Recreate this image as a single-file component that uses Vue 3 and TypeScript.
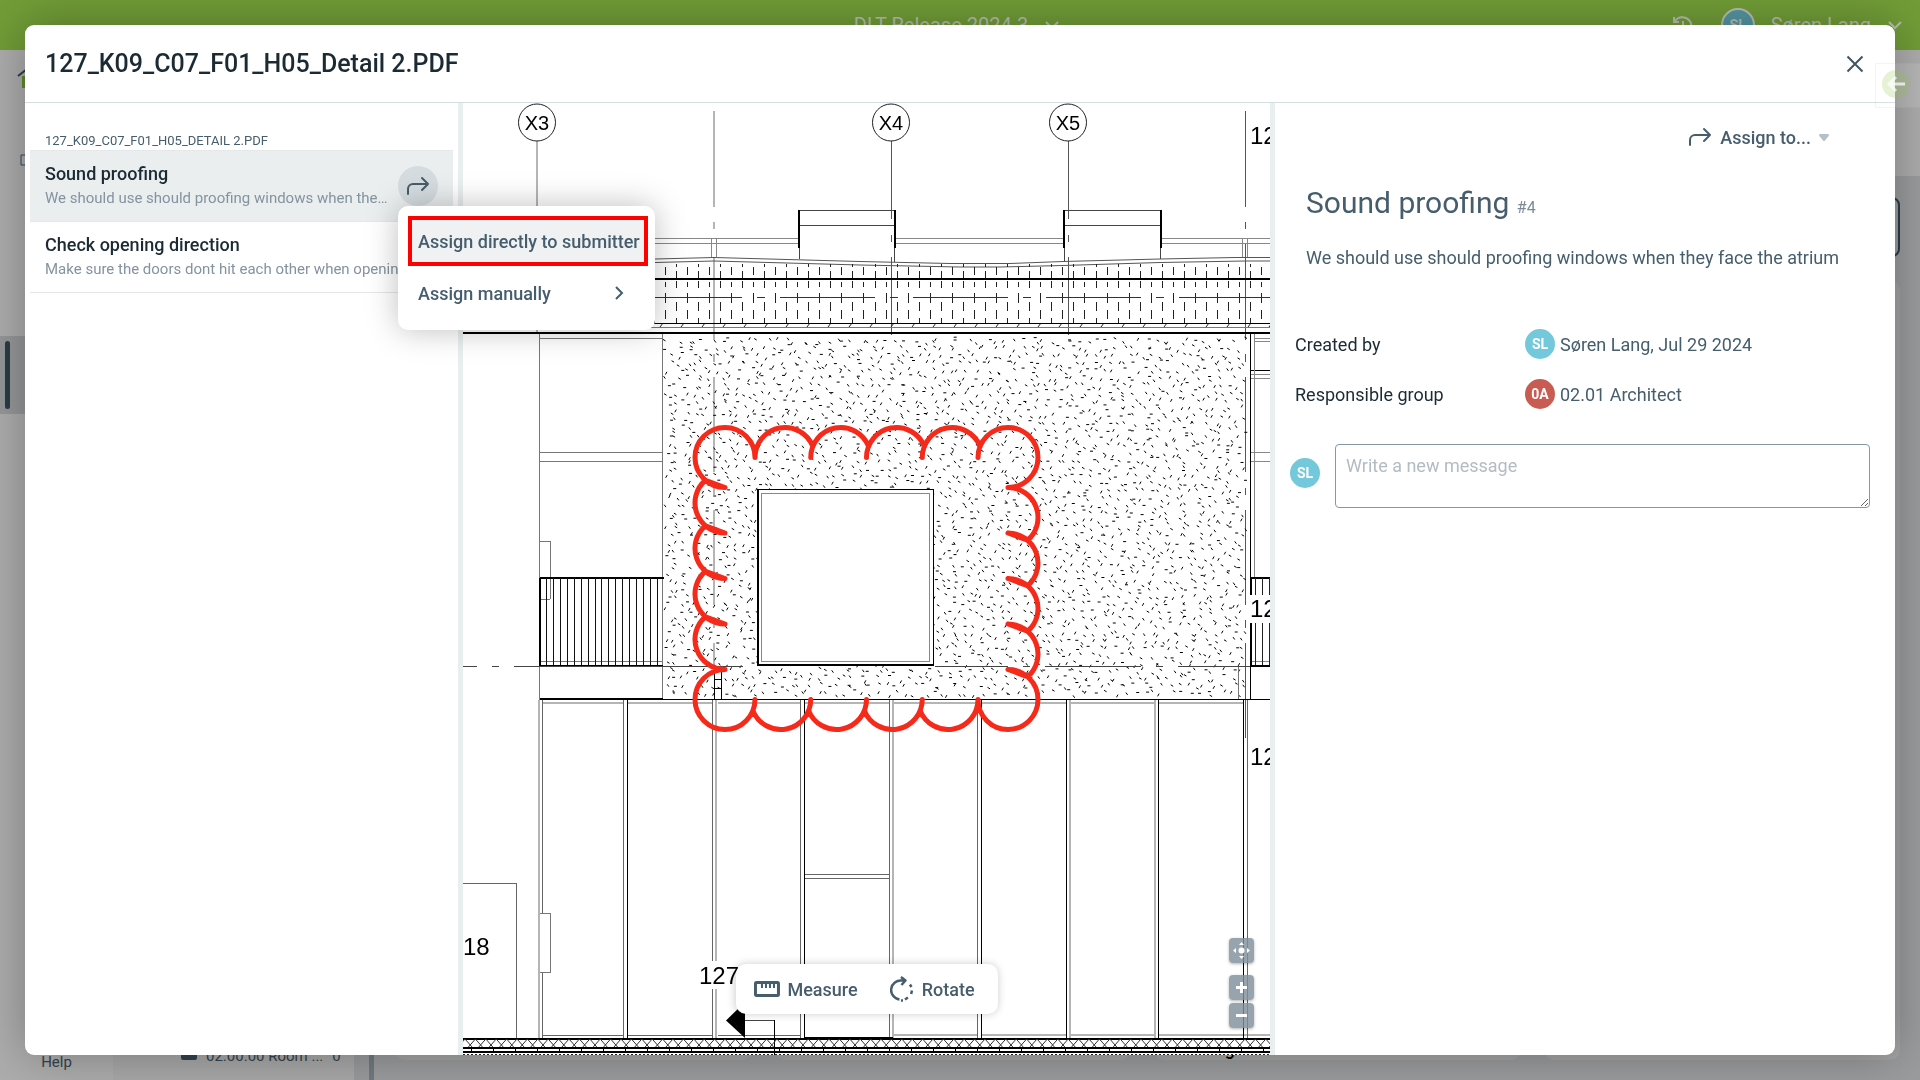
<script setup lang="ts">
import { computed, ref } from 'vue'

interface Comment {
  id: number
  title: string
  text: string
}

const fileName = '127_K09_C07_F01_H05_Detail 2.PDF'
const comments: Comment[] = [
  { id: 4, title: 'Sound proofing', text: 'We should use should proofing windows when they face the atrium' },
  { id: 5, title: 'Check opening direction', text: 'Make sure the doors dont hit each other when opening' },
]
const selectedId = ref(4)
const selected = computed(() => comments.find((c) => c.id === selectedId.value) ?? comments[0])
const menuOpen = ref(true)
const message = ref('')

const range = (n: number) => Array.from({ length: n }, (_, i) => i)

/* Concrete speckle of the facade: short strokes on a jittered grid. */
function speckle(): string {
  let seed = 41
  const rnd = () => {
    seed = (seed * 16807) % 2147483647
    return seed / 2147483647
  }
  let d = ''
  for (let y = 338; y < 694; y += 7.5) {
    for (let x = 666; x < 1246; x += 8.8) {
      const px = x + rnd() * 10 - 3
      const py = y + rnd() * 6 - 1
      const kind = Math.floor(rnd() * 4)
      const [dx, dy] = [[3, 0], [1.7, 2.4], [-1.5, 2.7], [2.5, 1.5]][kind]
      d += `M${px.toFixed(1)} ${py.toFixed(1)}l${dx} ${dy}`
    }
  }
  return d
}

/* Revision cloud: overlapping arcs of one radius, run clockwise. */
function cloud(): string {
  const r = 30
  const stepX = 55.75
  const stepY = 45.5
  const [left, right, top, bottom] = [725, 1008, 457.5, 699.5]
  const cutX = Math.sqrt(r * r - (stepX / 2) ** 2)
  const cutY = Math.sqrt(r * r - (stepY / 2) ** 2)
  const arc = (x1: number, y1: number, x2: number, y2: number, large = 0) =>
    `M${x1} ${y1}A${r} ${r} 0 ${large} 1 ${x2} ${y2}`
  let d = arc(left, top + r, left + r, top, 1)
  d += arc(right - r, top, right, top + r, 1)
  d += arc(right, bottom - r, right - r, bottom, 1)
  d += arc(left + r, bottom, left, bottom - r, 1)
  for (const k of range(4)) {
    const cx = left + r * 2 + k * stepX
    d += arc(cx - r, top, cx + stepX / 2, top - cutX)
    const bx = right - r * 2 - k * stepX
    d += arc(bx + r, bottom, bx - stepX / 2, bottom + cutX)
    const ry = top + r * 2 + k * stepY
    d += arc(right, ry - r, right + cutY, ry + stepY / 2) + `L${right} ${ry - r + stepY}`
    const ly = bottom - r * 2 - k * stepY
    d += arc(left, ly + r, left - cutY, ly - stepY / 2) + `L${left} ${ly + r - stepY}`
  }
  return d
}

function roofTicks(): string {
  let d = ''
  for (const i of range(56)) {
    const x = 654 + i * 11.05
    d += i % 2
      ? `M${x} 267v8M${x} 282v5M${x} 293v10M${x} 310v9`
      : `M${x} 264v3M${x} 271v7M${x} 281v7M${x} 302v9M${x} 318v5`
  }
  return d
}

function roofSlashes(): string {
  return range(30).map((i) => `M${660 + i * 21} 327l3 -4`).join('')
}

function railing(x0: number, count: number): string {
  return range(count).map((i) => `M${x0 + i * 6.93} 578V665`).join('')
}

function groundHatch(): string {
  return range(80).map((i) => `M${458 + i * 10.4} 1047l7 -8l7 8`).join('')
}

function groundJoints(): string {
  return range(38).map((i) => `M${471 + i * 22} 1048v4`).join('')
}

const speckles = speckle()
const cloudPath = cloud()
</script>

<template>
  <div class="page">
    <div class="topbar">
      <div class="project">
        <span>DLT Release 2024.3</span>
        <svg width="16" height="10" viewBox="0 0 16 10"><path d="M2 2l6 6 6-6" /></svg>
      </div>
      <div class="account">
        <svg width="24" height="24" viewBox="0 0 24 24"><path d="M3 4v5h5M3.500 9a9 9 0 1 1-1 5M12 8v5l3 2" /></svg>
        <span class="avatar ringed">SL</span>
        <span>Søren Lang</span>
        <svg width="16" height="10" viewBox="0 0 16 10"><path d="M2 2l6 6 6-6" /></svg>
      </div>
    </div>
    <div class="workspace">
      <div class="rail">
        <svg class="home" width="30" height="24" viewBox="0 0 30 24">
          <path d="M5 10h18v12H5z" fill="#5f8a2a" /><path d="M1 10L14 0l13 10" fill="none" stroke="#2b3c48" stroke-width="2" />
        </svg>
        <div class="rail-item"><span></span></div>
        <svg class="docs" width="16" height="12" viewBox="0 0 16 12"><path d="M1 1h14v10H1z" fill="none" stroke="#2b4c68" stroke-width="1" /></svg>
        <div class="help">Help</div>
      </div>
      <div class="tree">
        <div class="tree-row"><span class="folder"></span><span>02.00.00 Room ...</span><span>0</span></div>
      </div>
      <div class="board">
        <div class="board-head"></div>
        <div class="board-field"></div>
        <div class="board-cards">
          <div></div><div></div><div class="texted">Detailing</div><div></div>
        </div>
      </div>
    </div>
  </div>

  <div class="modal" role="dialog" :aria-label="fileName">
    <header class="modal-head">
      <h1>{{ fileName }}</h1>
      <button class="close" aria-label="Close">
        <svg width="18" height="18" viewBox="0 0 18 18"><path d="M1.500 1.500l15 15M16.500 1.500l-15 15" /></svg>
      </button>
    </header>

    <div class="modal-body">
      <aside class="list">
        <h2>{{ fileName }}</h2>
        <ul>
          <li v-for="c in comments" :key="c.id" :class="{ active: c.id === selectedId }" @click="selectedId = c.id">
            <div class="summary">
              <strong>{{ c.title }}</strong>
              <p>{{ c.text }}</p>
            </div>
            <div v-if="c.id === selectedId" class="share-wrap">
              <button class="share" aria-label="Assign" @click.stop="menuOpen = !menuOpen">
                <svg width="24" height="24" viewBox="0 0 24 24"><path d="M2 20v-5a5 5 0 0 1 5-5h15M16 4l6 6-6 6" /></svg>
              </button>
              <div v-if="menuOpen" class="menu">
                <button class="marked">Assign directly to submitter</button>
                <button>
                  <span>Assign manually</span>
                  <svg width="10" height="16" viewBox="0 0 10 16"><path d="M2 2l6 6-6 6" /></svg>
                </button>
              </div>
            </div>
          </li>
        </ul>
      </aside>

      <section class="viewer">
        <svg class="sheet" viewBox="463 103 807 952" preserveAspectRatio="xMidYMid slice">
          <g fill="none" shape-rendering="crispEdges">
            <!-- grid axes -->
            <path stroke="#b5b5b5" stroke-width="2" d="M537 141V333M714 111V207M714 222V229M714 257V340M714 354V362M714 377V472M714 488V495M714 510V605M714 620V628M714 643V670" />
            <path stroke="#555" d="M891.500 141V219M891.500 235V242M891.500 257V335M1068.500 141V219M1068.500 235V242M1068.500 257V335M1245.500 111V207M1245.500 222V229M1245.500 244V340M1245.500 354V362M1245.500 377V472M1245.500 488V495M1245.500 510V605M1245.500 620V628M1245.500 643V738" />
            <!-- parapet and roof lights -->
            <path stroke="#888" d="M463 238.500H798M463 243.500H798M896 238.500H1064M896 243.500H1064M1162 238.500H1270M1162 243.500H1270M711.500 239V257M716.500 239V257M1242.500 239V257M1247.500 239V257" />
            <path stroke="#444" d="M799 210.500H895M799 225.500H895M1064 210.500H1161M1064 225.500H1161M799.500 248V259M894.500 248V262M1064.500 248V262M1160.500 248V259" />
            <path stroke="#000" stroke-width="2" d="M799 210V248M895 210V248M1064 210V248M1161 210V248" />
          </g>
          <g fill="none">
            <path stroke="#555" d="M463 260L655 259L714 257.500L860 261.500L950 263.500H1010L1063 261.500L1160 259L1235 257.500H1270M463 264L655 262.500L714 261L860 265L960 267H1000L1063 265.500L1160 262.500L1245 261H1270" />
            <path stroke="#222" :d="roofSlashes()" />
          </g>
          <g fill="none" shape-rendering="crispEdges">
            <path stroke="#222" :d="roofTicks()" />
            <path stroke="#000" stroke-width="2" d="M463 279H1270M463 333H1270" />
            <path stroke="#000" d="M463 323.500H1270" />
            <path stroke="#777" d="M463 327.500H1270" />
            <path stroke="#333" stroke-dasharray="95 15 8 15" d="M647 297.500H1270" />
            <!-- left and right bays -->
            <path stroke="#777" d="M539.500 334V700M662.500 334V699M540 338.500H663M540 452.500H663M540 461.500H663M540 541.500H550M550.500 541V599M540 599.500H550M540 661.500H663" />
            <path stroke="#000" stroke-width="2" d="M540 578H664M540 666H663M540 699H663M540 578V666" />
            <path stroke="#111" :d="railing(546.5, 17)" />
          </g>
          <path :d="speckles" fill="none" stroke="#000" />
          <g fill="none" shape-rendering="crispEdges">
            <path stroke="#444" d="M463 666.500H477M492 666.500H499M514 666.500H743M935 666.500H1008M1023 666.500H1030M1045 666.500H1141M1156 666.500H1163M1178 666.500H1250" />
            <path stroke="#000" d="M663 699.500H1270" />
            <path stroke="#000" d="M714.500 670V699M721.500 670V699M714 679.500H721M714 688.500H721" />
            <path stroke="#777" d="M1238.500 667V699" />
            <!-- window -->
            <rect x="757.500" y="489.500" width="176" height="176" fill="#fff" stroke="#000" />
            <rect x="761.500" y="493.500" width="168" height="168" stroke="#888" />
            <path stroke="#000" d="M758.500 490V666M758 664.500H933M1250.500 334V699M1251 370.500H1270" />
            <path stroke="#888" d="M1254.500 334V578M1254 338.500H1270M1254 341.500H1270M1251 374.500H1270M1251 378.500H1270M1251 452.500H1270M1251 461.500H1270M1251 661.500H1270" />
            <path stroke="#000" stroke-width="2" d="M1250 578H1270M1250 666H1270M1251 578V666" />
            <path stroke="#222" :d="railing(1255.5, 3)" />
            <!-- ground floor glazing -->
            <path stroke="#b5b5b5" stroke-width="2" d="M539 700V1038M716 700V1038M893 700V1038M1070 700V1038M1155 700V1038M543 703H624M628 703H713M718 703H801M805 703H889M894 703H978M982 703H1066M1071 703H1154M1159 703H1243M894 1035H978M982 1035H1066M1071 1035H1154M1159 1035H1270" />
            <path stroke="#666" d="M542.500 700V1038M623.500 700V1038M712.500 700V1038M800.500 700V1038M889.500 700V1038M977.500 700V1038M1247.500 700V1038M805 874.500H889M805 878.500H889M543 1035.500H624M628 1035.500H713M718 1035.500H801M463 883.500H516M516.500 883V1038" />
            <path stroke="#000" d="M627.500 700V1038M804.500 700V1038M981.500 700V1038M1066.500 700V1038M1158.500 700V1038M1243.500 700V1038" />
            <path stroke="#fff" stroke-width="2" d="M714 872V886M714 894V908M714 1004V1018" />
            <path fill="#fff" stroke="#777" d="M539.500 913.500H550.500V972.500H539.500" />
            <!-- ground build-up -->
            <path stroke="#000" stroke-width="2" d="M463 1039H1270M463 1048H1270M463 1052H1270" />
            <path stroke="#000" stroke-width="3" d="M804 1038.500H893" />
            <path stroke="#000" :d="groundJoints()" />
            <path stroke="#222" stroke-dasharray="2 2" d="M463 1054.500H1270" />
            <path stroke="#444" d="M745 1020.500H774" />
            <path stroke="#000" d="M774.500 1020V1055" />
          </g>
          <path stroke="#333" fill="none" :d="groundHatch()" />
          <path d="M726 1020.500L745 1002V1038z" />
          <path fill="#fff" d="M698 961h42v28h-42zM1248 595h22v28h-22z" />
          <g fill="#fff" stroke="#222">
            <circle cx="537" cy="122.500" r="18.500" /><circle cx="891" cy="122.500" r="18.500" /><circle cx="1068" cy="122.500" r="18.500" />
          </g>
          <g class="axis" text-anchor="middle">
            <text x="537" y="130">X3</text><text x="891" y="130">X4</text><text x="1068" y="130">X5</text>
          </g>
          <g class="mark">
            <text x="463" y="955">18</text><text x="699" y="984">127</text>
            <text x="1250" y="144">12</text><text x="1250" y="617">12</text><text x="1250" y="765">12</text>
          </g>
          <path class="cloud" :d="cloudPath" />
        </svg>

        <div class="tools">
          <button>
            <svg width="26" height="16" viewBox="0 0 26 16"><rect x="1.500" y="1.500" width="23" height="13" rx="1" stroke-width="3" /><path d="M8 2v5M12 2v5M16 2v5M20 2v5" /></svg>
            Measure
          </button>
          <button>
            <svg width="24" height="26" viewBox="0 0 24 26">
              <path d="M15 4.500h-3a9.500 9.500 0 0 0-2.500 19M11 1l4.500 3.500-4 4.500" stroke-width="2.500" />
              <path d="M20 8.500l1.500 2.500M22 14.500l-.8 3.500M18 21.500l-3 2M11 24.500h2" stroke-width="2.500" />
            </svg>
            Rotate
          </button>
        </div>

        <div class="zoom">
          <button aria-label="Fit to view" class="fit">
            <svg width="17" height="17" viewBox="0 0 17 17"><circle cx="8.500" cy="8.500" r="3" /><path d="M8.500 0l2.500 3H6zM8.500 17l2.500-3H6zM0 8.500l3-2.500v5zM17 8.500l-3-2.500v5z" /></svg>
          </button>
          <button aria-label="Zoom in">
            <svg width="11" height="11" viewBox="0 0 11 11"><path d="M4 0h3v4h4v3H7v4H4V7H0V4h4z" /></svg>
          </button>
          <button aria-label="Zoom out">
            <svg width="11" height="11" viewBox="0 0 11 11"><path d="M0 4h11v3H0z" /></svg>
          </button>
        </div>
      </section>

      <aside class="detail">
        <div class="actions">
          <button class="assign">
            <svg width="24" height="20" viewBox="0 0 24 20"><path d="M2 18v-5a5 5 0 0 1 5-5h15M16 2l6 6-6 6" /></svg>
            <span>Assign to...</span>
            <svg class="caret" width="10" height="7" viewBox="0 0 10 7"><path d="M1 0h8q1 0 1 1.500L6 6.500q-1 1-2 0L0 1.500Q0 0 1 0z" /></svg>
          </button>
        </div>
        <h2>{{ selected.title }} <small>#{{ selected.id }}</small></h2>
        <p class="body-text">{{ selected.text }}</p>
        <dl>
          <div>
            <dt>Created by</dt>
            <dd><span class="avatar">SL</span>Søren Lang, Jul 29 2024</dd>
          </div>
          <div>
            <dt>Responsible group</dt>
            <dd><span class="avatar red">0A</span>02.01 Architect</dd>
          </div>
        </dl>
        <div class="compose">
          <span class="avatar">SL</span>
          <textarea v-model="message" aria-label="Write a new message" placeholder="Write a new message"></textarea>
        </div>
      </aside>
    </div>
  </div>

  <button class="back" aria-label="Back">
    <svg width="28" height="28" viewBox="0 0 28 28">
      <circle cx="14" cy="14" r="14" fill="#8cc63f" fill-opacity=".22" />
      <path d="M14 7l-7 7 7 7M8 14h15" fill="none" stroke="#fff" stroke-opacity=".7" stroke-width="3" />
    </svg>
  </button>
</template>

<style>
body {
  margin: 0;
  overflow: hidden;
}
</style>

<style scoped>
.page,
.modal,
.back {
  font-family: Roboto, "Liberation Sans", sans-serif;
  box-sizing: border-box;
}
button {
  font: inherit;
  border: 0;
  background: none;
  padding: 0;
  color: inherit;
  cursor: pointer;
}
h1, h2, p, ul, dl, dd {
  margin: 0;
  padding: 0;
}
svg {
  display: block;
  flex: none;
}

/* dimmed page behind the dialog */
.page {
  height: 100vh;
  display: flex;
  flex-direction: column;
  background: #adadad;
  overflow: hidden;
}
.topbar {
  height: 50px;
  flex: none;
  background: #719d37;
  color: #b9bdb2;
  font-size: 20px;
  display: grid;
  grid-template-columns: 1fr auto 1fr;
  align-items: center;
}
.topbar svg {
  fill: none;
  stroke: #b9bdb2;
  stroke-width: 2;
}
.project {
  grid-column: 2;
  display: flex;
  align-items: center;
  gap: 16px;
  padding-right: 6px;
}
.account {
  justify-self: end;
  display: flex;
  align-items: center;
  gap: 16px;
  padding-right: 17px;
}
.account svg:first-child {
  margin-right: 10px;
}
.workspace {
  flex: 1;
  display: flex;
}
.rail {
  width: 113px;
  flex: none;
  display: flex;
  flex-direction: column;
  position: relative;
}
.home {
  margin: 16px 0 0 17px;
}
.docs {
  position: absolute;
  left: 20px;
  top: 104px;
}
.rail-item {
  margin-top: 246px;
  padding: 5px;
  background: #959799;
}
.rail-item span {
  display: block;
  width: 5px;
  height: 68px;
  border-radius: 3px;
  background: #2b3c48;
}
.help {
  margin-top: auto;
  text-align: center;
  font-size: 15px;
  line-height: 20px;
  color: #34434d;
  padding-bottom: 8px;
}
.tree {
  width: 241px;
  flex: none;
  background: #a8a8a8;
  border-right: 15px solid #9a9b9c;
  display: flex;
  align-items: flex-end;
}
.tree-row {
  display: flex;
  align-items: center;
  gap: 9px;
  padding: 0 0 14px 68px;
  font-size: 15px;
  line-height: 20px;
  color: #34434d;
}
.folder {
  width: 16px;
  height: 14px;
  margin-bottom: 6px;
  border-radius: 2px;
  background: #34434d;
}
.board {
  flex: 1;
  border-left: 5px solid #717b81;
  background: #9a9c9e;
  display: flex;
  flex-direction: column;
}
.board-head {
  height: 126px;
  background: #adadad;
}
.board-field {
  height: 56px;
  margin: 21px 20px 0 21px;
  border: 2px solid #2c3e49;
  border-radius: 8px;
}
.board-cards {
  flex: 1;
  display: flex;
  gap: 23px;
  margin: 23px 20px 20px 21px;
}
.board-cards div {
  flex: 1;
  border-radius: 10px;
  background: #a4a4a4;
  box-sizing: border-box;
}
.board-cards .texted {
  display: flex;
  align-items: flex-end;
  flex-basis: 10px;
  padding: 0 0 1px 10px;
  font-size: 18px;
  line-height: 20px;
  font-weight: 500;
}

/* dialog */
.modal {
  position: fixed;
  inset: 25px;
  background: #fff;
  border-radius: 9px;
  box-shadow: 0 0 48px rgba(0, 0, 0, 0.3);
  display: flex;
  flex-direction: column;
  color: #455d6c;
  font-size: 18px;
}
.modal-head {
  height: 78px;
  flex: none;
  display: flex;
  align-items: center;
  justify-content: space-between;
  padding: 0 31px 0 20px;
  box-sizing: border-box;
  border-bottom: 1px solid #d5dddf;
}
.modal-head h1 {
  font-size: 25px;
  line-height: 32px;
  font-weight: 500;
  color: #1b2a33;
}
.close svg {
  fill: none;
  stroke: #3e5564;
  stroke-width: 2;
}
.modal-body {
  flex: 1;
  min-height: 0;
  display: flex;
}

/* comment list */
.list {
  width: 423px;
  flex: none;
  border-right: 5px solid #e9eeef;
  padding: 29px 5px 0;
}
.list h2 {
  font-size: 13px;
  line-height: 17px;
  font-weight: 400;
  text-transform: uppercase;
  padding: 0 0 1px 15px;
  color: #455d6c;
}
.list ul {
  list-style: none;
  border-top: 1px solid #e4e8e9;
}
.list li {
  height: 70px;
  border-bottom: 1px solid #e4e8e9;
  padding: 0 15px;
  display: flex;
  align-items: center;
  gap: 4px;
}
.list li.active {
  background: #eaeeef;
}
.summary {
  flex: 1;
  min-width: 0;
}
.summary strong {
  display: block;
  font-size: 18px;
  line-height: 24px;
  font-weight: 500;
  color: #1b2a33;
}
.summary p {
  font-size: 15px;
  line-height: 24px;
  color: #8493a0;
  white-space: nowrap;
  overflow: hidden;
  text-overflow: ellipsis;
}
.share-wrap {
  position: relative;
  z-index: 2;
}
.share {
  width: 40px;
  height: 40px;
  border-radius: 50%;
  background: #d5dcdf;
  display: grid;
  place-items: center;
}
.share svg,
.assign svg:first-child {
  fill: none;
  stroke: #455d6c;
  stroke-width: 2;
  stroke-linecap: round;
  stroke-linejoin: round;
}
.menu {
  position: absolute;
  top: 40px;
  left: 0;
  width: 257px;
  box-sizing: border-box;
  padding: 10px 7px 12px 10px;
  border-radius: 10px;
  background: #fff;
  box-shadow: 0 0 32px rgba(0, 0, 0, 0.26);
  display: flex;
  flex-direction: column;
  gap: 2px;
}
.menu button {
  width: 100%;
  height: 50px;
  padding: 0 24px 0 10px;
  display: flex;
  align-items: center;
  justify-content: space-between;
  font-weight: 500;
  white-space: nowrap;
}
.menu .marked {
  padding: 0 6px;
  border: 4px solid #f00;
  background: #f0f1f3;
}
.menu svg {
  fill: none;
  stroke: #455d6c;
  stroke-width: 2;
}

/* drawing */
.viewer {
  flex: 1;
  min-width: 0;
  position: relative;
  overflow: hidden;
}
.sheet {
  width: 100%;
  height: 100%;
}
.axis {
  font: 20px "Liberation Sans", sans-serif;
}
.mark {
  font: 24px "Liberation Sans", sans-serif;
}
.cloud {
  fill: none;
  stroke: #f52a1b;
  stroke-width: 5;
  stroke-linecap: round;
  stroke-linejoin: round;
}
.tools {
  position: absolute;
  bottom: 41px;
  left: 50%;
  transform: translateX(-50%);
  height: 50px;
  padding: 0 23px 0 18px;
  border-radius: 10px;
  background: #fff;
  box-shadow: 0 0 8px rgba(0, 0, 0, 0.2);
  display: flex;
  align-items: center;
  gap: 32px;
}
.tools button {
  display: flex;
  align-items: center;
  gap: 8px;
  font-weight: 500;
}
.tools svg {
  fill: none;
  stroke: #455d6c;
  stroke-width: 2;
  stroke-linejoin: round;
}
.zoom {
  position: absolute;
  right: 16px;
  bottom: 27px;
  display: flex;
  flex-direction: column;
  gap: 3px;
}
.zoom button {
  width: 25px;
  height: 25px;
  border-radius: 4px;
  background: rgba(128, 144, 155, 0.82);
  box-shadow: 0 1px 3px rgba(0, 0, 0, 0.3);
  display: grid;
  place-items: center;
}
.zoom .fit {
  margin-bottom: 9px;
}
.zoom svg {
  fill: #fff;
}

/* comment detail */
.detail {
  width: 625px;
  flex: none;
  box-sizing: border-box;
  border-left: 5px solid #e9eeef;
  padding: 19px 25px 0 20px;
}
.actions {
  display: flex;
  justify-content: flex-end;
  padding-right: 41px;
}
.assign {
  height: 30px;
  display: flex;
  align-items: center;
  gap: 8px;
  font-weight: 500;
}
.caret {
  fill: #b5c0c7;
}
.detail h2 {
  margin: 31px 0 0 11px;
  font-size: 30px;
  line-height: 40px;
  font-weight: 400;
}
.detail small {
  font-size: 16px;
  color: #7b8b97;
}
.body-text {
  margin: 18px 0 0 11px;
  line-height: 24px;
}
dl {
  margin-top: 49px;
}
dl div {
  height: 50px;
  display: flex;
  align-items: center;
}
dt {
  width: 230px;
  color: #1b2a33;
}
dd {
  display: flex;
  align-items: center;
  gap: 5px;
}
.avatar {
  width: 30px;
  height: 30px;
  flex: none;
  border-radius: 50%;
  background: #73c8db;
  color: #fff;
  font-size: 14px;
  font-weight: 700;
  display: grid;
  place-items: center;
}
.avatar.red {
  background: #c85c52;
}
.avatar.ringed {
  border: 2px solid #b9bdb2;
  background: #5496a3;
  color: #b9bdb2;
}
.compose {
  display: flex;
  align-items: center;
  gap: 15px;
  margin: 25px 0 0 -5px;
}
.compose .avatar {
  margin-bottom: 6px;
}
textarea {
  display: block;
  flex: 1;
  height: 64px;
  box-sizing: border-box;
  padding: 9px 10px;
  border: 1px solid #8797a2;
  border-radius: 4px;
  font: 18px/24px Roboto, sans-serif;
  color: #455d6c;
  outline: 0;
}
textarea::placeholder {
  color: #b3bcc3;
}
.back {
  position: fixed;
  top: 63px;
  right: 0;
  width: 45px;
  height: 45px;
  padding: 0 0 3px 6px;
  border: 1px solid rgba(120, 120, 120, 0.08);
  border-right: 0;
  background: rgba(255, 255, 255, 0.1);
}
</style>
